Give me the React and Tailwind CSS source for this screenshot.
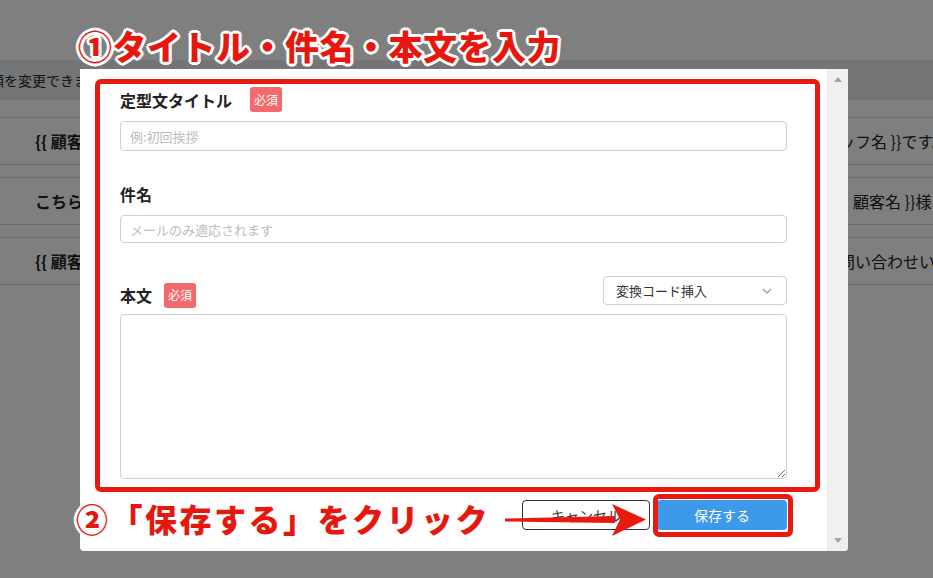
import React from "react";

const FONT = { fontFamily: '"Noto Sans CJK JP", "Noto Sans", sans-serif' };

function Badge({ className = "" }) {
  return (
    <span
      className={
        "inline-flex h-[25px] w-[32px] items-center justify-center rounded-[3px] bg-[#f26a6b] text-[12px] text-white " +
        className
      }
    >
      必須
    </span>
  );
}

function BgRow({ left, right, rightStart }) {
  return (
    <div className="flex h-[48px] items-center whitespace-nowrap border-y border-[#d6d6d6] bg-white text-[16px] text-[#222]">
      <div className={"shrink-0 overflow-hidden pl-[35px] font-bold " + rightStart}>{left}</div>
      <div className="shrink-0">{right}</div>
    </div>
  );
}

export default function App() {
  const outline =
    "[text-shadow:2px_0_0_#fff,-2px_0_0_#fff,0_2px_0_#fff,0_-2px_0_#fff,2px_2px_0_#fff,-2px_-2px_0_#fff,2px_-2px_0_#fff,-2px_2px_0_#fff,3px_0_0_#fff,-3px_0_0_#fff,0_3px_0_#fff,0_-3px_0_#fff]";
  return (
    <div style={FONT} className="relative h-[578px] w-[933px] overflow-hidden bg-white">
      {/* background page */}
      <div className="h-[60px]" />
      <div className="flex h-[40px] items-center overflow-hidden whitespace-nowrap bg-[#e6eaef] text-[14px] text-[#222]">
        <span className="-ml-[10px]">順を変更できます</span>
      </div>
      <div className="mt-[17px] flex flex-col gap-[12px]">
        <BgRow left="{{ 顧客名 }}様 いつもお世話になっております。" right="ッフ名 }}です。" rightStart="w-[839px]" />
        <BgRow left="こちらは {{ 顧客名 }}様へのご案内です。" right="顧客名 }}様" rightStart="w-[853px]" />
        <BgRow left="{{ 顧客名 }}様 お問い合わせいただき" right="問い合わせいただき" rightStart="w-[839px]" />
      </div>

      {/* overlay */}
      <div className="absolute inset-0 bg-black/50" />

      {/* modal */}
      <div className="absolute left-[80px] top-[69px] flex h-[482px] w-[768px] overflow-hidden rounded-b-[4px] bg-white">
        <div className="flex flex-1 flex-col px-[40px] pt-[18px] text-[#333]">
          <div className="flex h-[25px] items-center">
            <span className="text-[16px] font-bold text-[#222]">定型文タイトル</span>
            <Badge className="ml-[18px]" />
          </div>
          <input
            className="mt-[9px] h-[30px] w-full rounded-[4px] border border-[#cfcfcf] px-[9px] text-[13px] outline-none placeholder:text-[#bdbdbd]"
            placeholder="例:初回挨拶"
          />
          <div className="mt-[30px] flex h-[25px] items-center">
            <span className="text-[16px] font-bold text-[#222]">件名</span>
          </div>
          <input
            className="mt-[9px] h-[28px] w-full rounded-[4px] border border-[#cfcfcf] px-[9px] text-[13px] outline-none placeholder:text-[#bdbdbd]"
            placeholder="メールのみ適応されます"
          />
          <div className="mt-[33px] flex h-[32px] items-start justify-between">
            <div className="mt-[6px] flex h-[26px] items-center">
              <span className="text-[16px] font-bold text-[#222]">本文</span>
              <Badge className="ml-[12px]" />
            </div>
            <div className="flex h-[29px] w-[184px] items-center justify-between rounded-[4px] border border-[#cfcfcf] pl-[12px] pr-[14px]">
              <span className="text-[13px] text-[#333]">変換コード挿入</span>
              <svg width="10" height="6" viewBox="0 0 10 6">
                <path d="M1 1l4 4 4-4" fill="none" stroke="#a0a0a0" strokeWidth="1.4" />
              </svg>
            </div>
          </div>
          <textarea className="mt-[6px] h-[165px] w-full rounded-[4px] border border-[#cfcfcf] outline-none" />
          <div className="mt-[21px] flex justify-end gap-[7px]">
            <button className="h-[30px] w-[128px] rounded-[4px] border border-[#333] text-[14px] text-[#333]">
              キャンセル
            </button>
            <button className="h-[30px] w-[130px] rounded-[4px] bg-[#3d99e9] text-[14px] text-white">
              保存する
            </button>
          </div>
        </div>
        {/* scrollbar */}
        <div className="flex w-[21px] flex-col items-center justify-between bg-[#f0f0f0] pb-[8px] pt-[8px]">
          <svg width="8" height="5" viewBox="0 0 8 5">
            <path d="M0 5L4 0L8 5Z" fill="#a3a3a3" />
          </svg>
          <svg width="8" height="5" viewBox="0 0 8 5">
            <path d="M0 0L4 5L8 0Z" fill="#a3a3a3" />
          </svg>
        </div>
      </div>

      {/* annotations */}
      <div className="absolute left-[95px] top-[79px] h-[413px] w-[725px] rounded-[6px] border-[5px] border-[#e81a10]" />
      <div className="absolute left-[653px] top-[494px] h-[43px] w-[140px] rounded-[6px] border-[5px] border-[#e81a10]" />

      <svg className="absolute left-0 top-0" width="933" height="578" viewBox="0 0 933 578">
        <path d="M505 518.5 L615 516 L615 523 L505 521.5 Z" fill="#e81a10" />
        <path d="M612 504 L646 519.5 L612 536 L620 519.5 Z" fill="#e81a10" />
      </svg>

      <div
        className={
          "absolute left-[78px] top-[24px] whitespace-nowrap text-[34px] font-black leading-[44px] tracking-[0.5px] text-[#e8170d] " +
          outline
        }
      >
        ①タイトル・件名・本文を入力
      </div>
      <div
        className={
          "absolute left-[76px] top-[497px] whitespace-nowrap text-[32px] font-black leading-[42px] tracking-[2.5px] text-[#e8170d] " +
          outline
        }
      >
        ②「保存する」をクリック
      </div>
    </div>
  );
}
